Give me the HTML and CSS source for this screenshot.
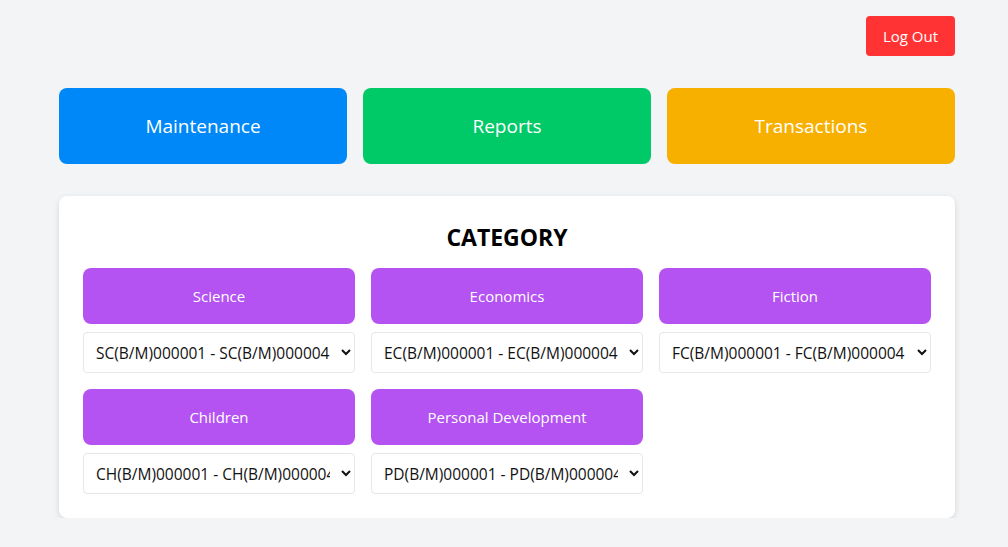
FILE: index.html
```html
<!DOCTYPE html>
<html lang="en">
<head>
<meta charset="utf-8">
<title>Library</title>
<link rel="stylesheet" href="styles.css">
</head>
<body>
<div class="page">
  <div class="topbar">
    <button class="logout">Log Out</button>
  </div>
  <nav class="nav">
    <button class="nav-btn blue">Maintenance</button>
    <button class="nav-btn green">Reports</button>
    <button class="nav-btn orange">Transactions</button>
  </nav>
  <section class="card">
    <h2 class="title">CATEGORY</h2>
    <div class="grid">
      <div class="cat">
        <button class="cat-btn">Science</button>
        <select class="cat-select"><option>SC(B/M)000001 - SC(B/M)000004</option></select>
      </div>
      <div class="cat">
        <button class="cat-btn">Economics</button>
        <select class="cat-select"><option>EC(B/M)000001 - EC(B/M)000004</option></select>
      </div>
      <div class="cat">
        <button class="cat-btn">Fiction</button>
        <select class="cat-select"><option>FC(B/M)000001 - FC(B/M)000004</option></select>
      </div>
      <div class="cat">
        <button class="cat-btn">Children</button>
        <select class="cat-select"><option>CH(B/M)000001 - CH(B/M)000004</option></select>
      </div>
      <div class="cat">
        <button class="cat-btn">Personal Development</button>
        <select class="cat-select"><option>PD(B/M)000001 - PD(B/M)000004</option></select>
      </div>
    </div>
  </section>
</div>
</body>
</html>
```
FILE: styles.css
```css
* { box-sizing: border-box; }
html, body { margin: 0; padding: 0; }
body {
  background: #f3f4f6;
  font-family: "Open Sans", "Noto Sans", sans-serif;
  color: #111;
}
.page {
  width: 896px;
  margin-left: 59px;
  padding-top: 16px;
}
.topbar {
  display: flex;
  justify-content: flex-end;
}
button { font-family: inherit; border: 0; cursor: pointer; }
.logout {
  background: #ff3333;
  color: #fff;
  font-size: 15px;
  height: 40px;
  width: 89px;
  border-radius: 4px;
}
.nav {
  display: grid;
  grid-template-columns: repeat(3, 1fr);
  gap: 16px;
  margin-top: 32px;
}
.nav-btn {
  height: 76px;
  border-radius: 8px;
  color: #fff;
  font-size: 19px;
}
.blue { background: #0088f8; }
.green { background: #00c967; }
.orange { background: #f8b000; }
.card {
  margin-top: 32px;
  background: #fff;
  border-radius: 8px;
  box-shadow: 0 2px 6px rgba(0,0,0,0.12);
  padding: 24px;
}
.title {
  margin: 0 0 16px;
  text-align: center;
  font-size: 23px;
  font-weight: 700;
  line-height: 32px;
  padding-top: 1px;
  height: 32px;
  color: #000;
}
.grid {
  display: grid;
  grid-template-columns: repeat(3, 1fr);
  column-gap: 16px;
  row-gap: 16px;
}
.cat {
  display: flex;
  flex-direction: column;
  gap: 8px;
}
.cat-btn {
  height: 56px;
  background: #b452f2;
  color: #fff;
  font-size: 15px;
  border-radius: 8px;
}
.cat-select {
  height: 41px;
  width: 100%;
  border: 1px solid #e5e7eb;
  border-radius: 4px;
  background: #fff;
  font-family: inherit;
  font-size: 15.5px;
  color: #111;
  padding: 0 8px;
}
```
